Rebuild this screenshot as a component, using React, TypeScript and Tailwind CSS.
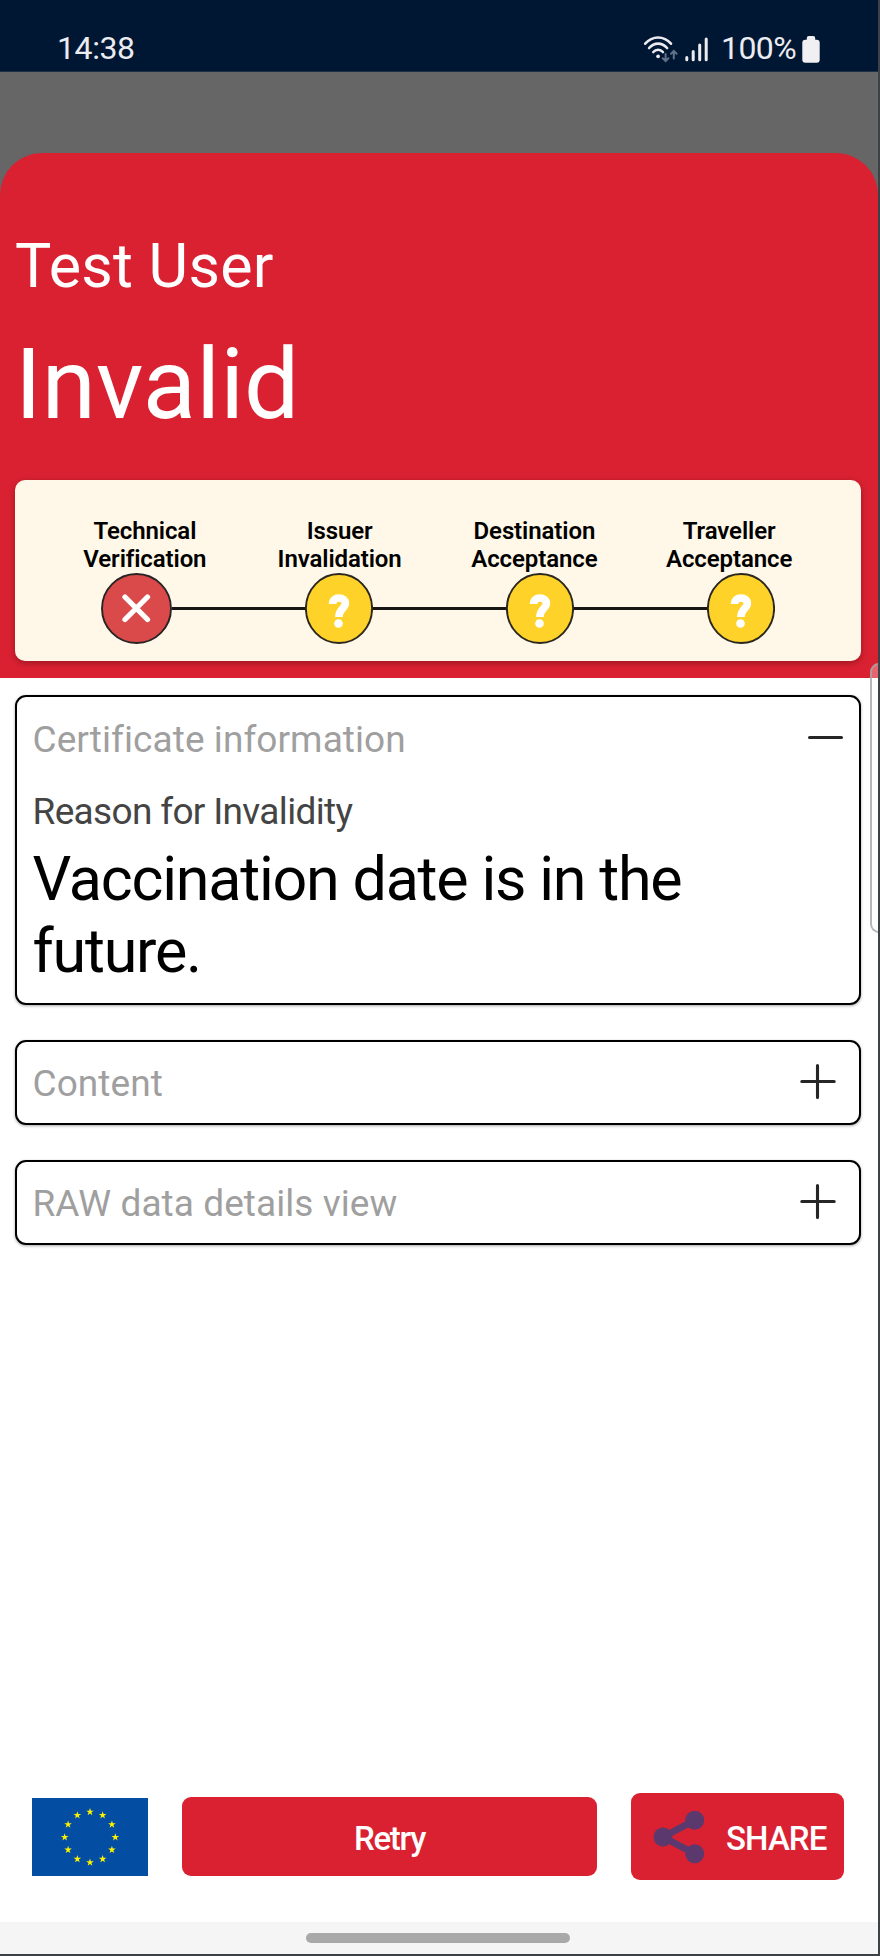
import React from "react";

const steps = [
  ["Technical", "Verification"],
  ["Issuer", "Invalidation"],
  ["Destination", "Acceptance"],
  ["Traveller", "Acceptance"],
];

function StatusBar() {
  return (
    <div className="flex h-[72px] items-start justify-between border-b border-[#1d3046] bg-[#001733] pt-[30px] pl-[57px] pr-[58px] text-[32px] leading-[37px] text-[#ececf0]">
      <span className="tracking-[-0.4px]">14:38</span>
      <div className="flex items-start">
        <svg width="66" height="30" viewBox="0 0 66 30" className="mt-[5px] mr-[12px]" fill="none" strokeLinecap="round">
          <g stroke="#ececf0" strokeWidth="2.6">
            <path d="M2.2 8.700C9.500.4 20.700.4 28 8.700" />
            <path d="M6.100 13C11.300 7.200 18.900 7.200 24.100 13" />
            <path d="M10.300 17C13 14 17.200 14 19.900 17" />
          </g>
          <circle cx="15.100" cy="21.300" r="1.900" fill="#ececf0" />
          <g stroke="#61718a" strokeWidth="2">
            <path d="M22.600 19V25.500M19.800 23.300L22.600 26L25.400 23.300" />
            <path d="M30.800 23.500V16.500M28 18.700L30.800 16L33.600 18.700" />
          </g>
          <g stroke="#ececf0" strokeWidth="3">
            <path d="M43.800 22.500V24.800M50.200 16.500V24.800M56.700 10V24.800M63.200 4V24.800" />
          </g>
        </svg>
        <span className="tracking-[-0.6px]">100%</span>
        <svg width="18" height="28" viewBox="0 0 18 28" className="mt-[6px] ml-[6px]" fill="#f0f0f2">
          <rect x="4.800" y="0" width="8.400" height="8" rx="2" />
          <rect x="0.300" y="3.800" width="17.400" height="23" rx="3" />
        </svg>
      </div>
    </div>
  );
}

function Failed() {
  return (
    <svg width="71" height="71" viewBox="0 0 71 71" className="shrink-0" fill="none">
      <circle cx="35.500" cy="35.500" r="34.500" fill="#da4a4a" stroke="#282324" strokeWidth="1.900" />
      <path d="M24 24L46.500 46.500M46.500 24L24 46.500" stroke="#fff" strokeWidth="5.300" strokeLinecap="round" />
    </svg>
  );
}

function Unknown() {
  return (
    <svg width="68" height="71" viewBox="0 0 68 71" className="shrink-0" fill="none">
      <ellipse cx="34" cy="35.500" rx="33.100" ry="34.500" fill="#ffd22a" stroke="#2a2721" strokeWidth="1.900" />
      <path d="M27.600 31C27.600 27 30.300 25 33.800 25C37.600 25 40.400 27.200 40.400 30.300C40.400 35.600 33.900 35.500 33.900 44" stroke="#fff" strokeWidth="7.600" />
      <circle cx="33.500" cy="50.500" r="4.300" fill="#fff" />
    </svg>
  );
}

function Line() {
  return <div className="h-[3px] w-[133px] shrink-0 bg-[#171614]" />;
}

function Plus() {
  return (
    <svg width="36" height="36" viewBox="0 0 36 36" stroke="#262626" strokeWidth="3.100" strokeLinecap="round">
      <path d="M1.800 17.500H34.200M17.500 1.600V33.400" />
    </svg>
  );
}

function Minus() {
  return (
    <svg width="36" height="36" viewBox="0 0 36 36" stroke="#262626" strokeWidth="3" strokeLinecap="round">
      <path d="M1.500 15.500H33.500" />
    </svg>
  );
}

function Collapsed({ title }: { title: string }) {
  return (
    <div className="flex h-[85.5px] items-center justify-between rounded-[11px] border-2 border-black bg-white pl-[15.500px] pr-[23.500px] shadow-[0_1px_3px_rgba(0,0,0,0.35)]">
      <span className="pt-[3px] text-[37px] leading-[44px] tracking-[0.070px] text-[#9f9f9f]">{title}</span>
      <Plus />
    </div>
  );
}

function Flag() {
  const stars = Array.from({ length: 12 }, (_, i) => i * 30);
  return (
    <svg width="116" height="78" viewBox="0 0 116 78">
      <rect width="116" height="78" fill="#034ea2" />
      {stars.map((a) => {
        const r = (a * Math.PI) / 180;
        return (
          <path
            key={a}
            transform={`translate(${58 + 25.300 * Math.sin(r)} ${39.200 - 25.300 * Math.cos(r)})`}
            d="M0-4L.9-1.240H3.800L1.450.47L2.350 3.240L0 1.530L-2.350 3.240L-1.450.47L-3.800-1.240H-.9Z"
            fill="#fff200"
          />
        );
      })}
    </svg>
  );
}

function ShareIcon() {
  return (
    <svg width="52" height="54" viewBox="0 0 52 54" fill="#5b396f" stroke="#5b396f">
      <path d="M41.700 10.200L10 27L41.700 43.700" fill="none" strokeWidth="6.800" />
      <g stroke="none">
        <circle cx="10" cy="27" r="9.500" />
        <circle cx="41.700" cy="10.200" r="9.500" />
        <circle cx="41.700" cy="43.700" r="9.500" />
      </g>
    </svg>
  );
}

export default function App() {
  return (
    <div className="relative flex h-[1956px] w-[880px] flex-col overflow-hidden border-r-2 border-b-2 border-[#3b4145] bg-white font-[Roboto,sans-serif]">
      <StatusBar />
      <div className="bg-[#666666] pt-[81px]">
        <header className="h-[525px] rounded-t-[42px] bg-[#da2131] px-[15px] pt-[77px] text-white">
          <h2 className="text-[61px] leading-[72px] tracking-[0.250px]">Test User</h2>
          <h1 className="mt-[25px] text-[98px] leading-[116px] tracking-[0.100px]">Invalid</h1>
          <section className="mt-[37px] h-[181px] w-[846px] rounded-[10px] bg-[#fff7e7] pt-[37px] text-black shadow-[0_2px_6px_rgba(0,0,0,0.3)]">
            <div className="flex pr-[34.500px] pl-[32.500px] text-center text-[24px] leading-[28px] font-semibold tracking-[-0.100px]">
              {steps.map(([a, b]) => (
                <div key={a} className="flex-1">
                  {a}
                  <br />
                  {b}
                </div>
              ))}
            </div>
            <div className="flex items-center pl-[85.500px]">
              <Failed />
              <Line />
              <Unknown />
              <Line />
              <Unknown />
              <Line />
              <Unknown />
            </div>
          </section>
        </header>
      </div>
      <main className="flex flex-1 flex-col gap-[34.500px] pt-[17px] pr-[17px] pl-[15px]">
        <section className="h-[310px] rounded-[11px] border-2 border-black bg-white pl-[15.500px] pr-[15px] pt-[21px] shadow-[0_1px_3px_rgba(0,0,0,0.35)]">
          <div className="flex items-center justify-between">
            <span className="text-[37px] leading-[44px] tracking-[0.070px] text-[#9f9f9f]">Certificate information</span>
            <Minus />
          </div>
          <p className="mt-[28px] text-[37px] leading-[44px] tracking-[-0.018em] text-[#444444]">Reason for Invalidity</p>
          <p className="mt-[10px] text-[61px] leading-[71.5px] tracking-[-0.020em] text-black">
            Vaccination date is in the
            <br />
            future.
          </p>
        </section>
        <Collapsed title="Content" />
        <Collapsed title="RAW data details view" />
      </main>
      <footer className="flex h-[87px] items-center pl-[32px]">
        <Flag />
        <button className="ml-[34px] h-[79px] w-[415px] rounded-[9px] bg-[#da2131] pt-[4px] text-[33px] font-medium tracking-[-1.300px] text-white">Retry</button>
        <button className="ml-[34px] flex h-[87px] w-[213px] items-center rounded-[9px] bg-[#da2131] pl-[22px] text-[33px] font-medium tracking-[-0.900px] text-white">
          <ShareIcon />
          <span className="ml-[21px] pt-[4px]">SHARE</span>
        </button>
      </footer>
      <div className="mt-[42px] flex h-[32px] items-center justify-center bg-[#f5f5f5]">
        <div className="mr-[2px] h-[10px] w-[264px] rounded-full bg-[#a9a9a9]" />
      </div>
      <div className="absolute top-[663px] -right-[4px] h-[270px] w-[12px] rounded-l-[9px] border-2 border-[#a5a5a5]/80 bg-white/30" />
    </div>
  );
}
